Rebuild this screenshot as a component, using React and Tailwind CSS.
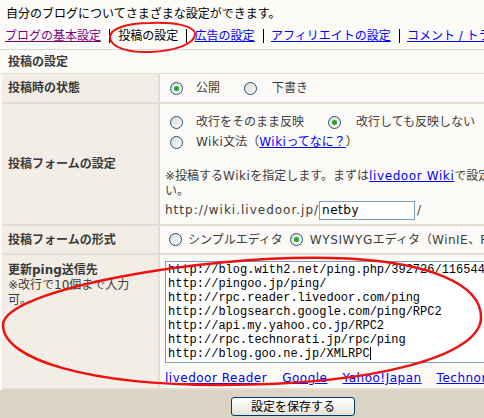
import React from "react";

const PINGS = [
  "http://blog.with2.net/ping.php/392726/1165448752",
  "http://pingoo.jp/ping/",
  "http://rpc.reader.livedoor.com/ping",
  "http://blogsearch.google.com/ping/RPC2",
  "http://api.my.yahoo.co.jp/RPC2",
  "http://rpc.technorati.jp/rpc/ping",
  "http://blog.goo.ne.jp/XMLRPC",
];

function Radio({ checked }) {
  return (
    <span className="w-[13px] h-[13px] shrink-0 rounded-full border border-[#1c5180] bg-gradient-to-br from-[#d8d8d2] to-white flex items-center justify-center">
      {checked && <span className="w-[5px] h-[5px] rounded-full bg-[#27a327]" />}
    </span>
  );
}

function Sep() {
  return <span className="w-px h-[14px] bg-black" />;
}

function Row({ label, children, top = false, className = "" }) {
  return (
    <div className={`flex border-b-2 border-[#e4ddd2] ${className}`}>
      <div
        className={`w-[158px] shrink-0 bg-[#f2eee6] border-r-2 border-[#e4ddd2] pl-[6px] pr-[14px] flex ${
          top ? "items-start pt-[8px]" : "items-center"
        }`}
      >
        {label}
      </div>
      <div className="flex-1 bg-[#fcfaf6] pl-[5px] text-[#3c3c3c]">{children}</div>
    </div>
  );
}

export default function App() {
  return (
    <div className="relative w-[484px] h-[418px] overflow-hidden bg-[#fcfbf8] text-[12px] font-['DejaVu_Sans','Noto_Sans_CJK_JP',sans-serif]">
      <div className="w-[586px]">
        <p className="pl-[6px] pt-[6px] h-[24px] leading-[16px] text-black whitespace-nowrap">
          自分のブログについてさまざまな設定ができます。
        </p>
        <nav className="h-[24px] pl-[5px] flex items-center gap-[8px] whitespace-nowrap">
          <a className="text-[#800080] underline">ブログの基本設定</a>
          <Sep />
          <span className="text-black ml-px">投稿の設定</span>
          <Sep />
          <a className="text-[#0000ff] underline">広告の設定</a>
          <Sep />
          <a className="text-[#0000ff] underline">アフィリエイトの設定</a>
          <Sep />
          <a className="text-[#0000ff] underline">コメント / トラックバックの設定</a>
        </nav>

        <div className="mt-px border-t border-[#d6d6d6]">
          <div className="h-[24px] pl-[8px] flex items-center font-bold text-[#3a3a3a] border-b border-[#e4ddd2]">
            投稿の設定
          </div>

          <div className="pl-[2px]">
            <Row label={<b className="text-[#3a3a3a]">投稿時の状態</b>} className="h-[30px]">
              <div className="h-full flex items-center pl-[5px]">
                <Radio checked />
                <span className="ml-[13px]">公開</span>
                <span className="ml-[24px]" />
                <Radio />
                <span className="ml-[15px]">下書き</span>
              </div>
            </Row>

            <Row label={<b className="text-[#3a3a3a]">投稿フォームの設定</b>} className="h-[122px]">
              <div className="pt-[8px]">
                <div className="h-[20px] flex items-center pl-[5px]">
                  <Radio />
                  <span className="ml-[13px]">改行をそのまま反映</span>
                  <span className="ml-[24px]" />
                  <Radio checked />
                  <span className="ml-[15px]">改行しても反映しない</span>
                </div>
                <div className="h-[20px] flex items-center pl-[5px]">
                  <Radio />
                  <span className="ml-[13px]">
                    <span className="tracking-[0.5px]">Wiki</span>文法（
                    <a className="text-[#0000ff] underline">
                      <span className="tracking-[0.5px]">Wiki</span>ってなに？
                    </a>
                    ）
                  </span>
                </div>
                <p className="mt-[17px] leading-[15px] whitespace-nowrap">
                  ※投稿する<span className="tracking-[0.5px]">Wiki</span>を指定します。まずは
                  <a className="text-[#0000ff] underline tracking-[0.6px]">livedoor Wiki</a>
                  で設定してくださ
                  <br />
                  い。
                </p>
                <div className="mt-px h-[20px] flex items-center whitespace-nowrap">
                  <span className="tracking-[1px]">http://wiki.livedoor.jp/</span>
                  <span className="w-[96px] h-[19px] border border-[#7f9db9] bg-white text-black pl-[2px] flex items-center text-[12px] tracking-[0.5px]">
                    netby
                  </span>
                  <span className="ml-[2px]">/</span>
                </div>
              </div>
            </Row>

            <Row label={<b className="text-[#3a3a3a]">投稿フォームの形式</b>} className="h-[29px]">
              <div className="h-full flex items-center pl-[4px] whitespace-nowrap">
                <Radio />
                <span className="ml-[6px]">シンプルエディタ</span>
                <span className="ml-[7px]" />
                <Radio checked />
                <span className="ml-[7px]">
                  <span className="tracking-[0.6px]">WYSIWYG</span>エディタ（
                  <span className="tracking-[0.5px]">WinIE</span>、Firefox）
                </span>
              </div>
            </Row>

            <Row
              top
              className="h-[135px]"
              label={
                <div className="leading-[15px] text-[#3a3a3a]">
                  <b>更新ping送信先</b>
                  <br />
                  ※改行で10個まで入力可。
                </div>
              }
            >
              <div className="pt-[6px]">
                <div className="w-[400px] h-[102px] border border-[#7f9db9] bg-white pl-[2px] pt-px overflow-hidden text-black font-['Liberation_Mono',monospace] text-[12px] leading-[14px] whitespace-pre">
                  {PINGS.map((p, i) => (
                    <div key={i}>
                      {p}
                      {i === PINGS.length - 1 && (
                        <span className="inline-block w-px h-[13px] bg-black align-middle" />
                      )}
                    </div>
                  ))}
                </div>
                <div className="h-[22px] mt-[4px] flex items-center gap-[15px] whitespace-nowrap tracking-[0.5px]">
                  <a className="text-[#0000ff] underline">livedoor Reader</a>
                  <a className="text-[#0000ff] underline">Google</a>
                  <a className="text-[#0000ff] underline">Yahoo!Japan</a>
                  <a className="text-[#0000ff] underline">Technorati</a>
                </div>
              </div>
            </Row>
          </div>

          <div className="h-[28px] bg-[#dbd4c4] flex justify-center pt-[7px]">
            <button className="w-[124px] h-[19px] rounded-[3px] border border-[#003c74] bg-gradient-to-b from-white to-[#e6e3d8] text-black text-[12px] leading-none flex items-center justify-center">
              設定を保存する
            </button>
          </div>
        </div>
      </div>

      <svg className="absolute inset-0 pointer-events-none" width="484" height="418" viewBox="0 0 484 418">
        <path
          d="M150 23 C126 23 110 29 110 37 C110 47 128 53 150 52 C175 51 195 44 195 34 C195 26 175 22 150 23 Z"
          fill="none"
          stroke="#ee1111"
          strokeWidth="2"
        />
        <path
          d="M3 325 C3 290 200 255 330 258 C430 260 482 285 481 318 C480 355 380 385 220 385 C90 385 3 360 3 325 Z"
          fill="none"
          stroke="#ee1111"
          strokeWidth="2.5"
        />
      </svg>
    </div>
  );
}
